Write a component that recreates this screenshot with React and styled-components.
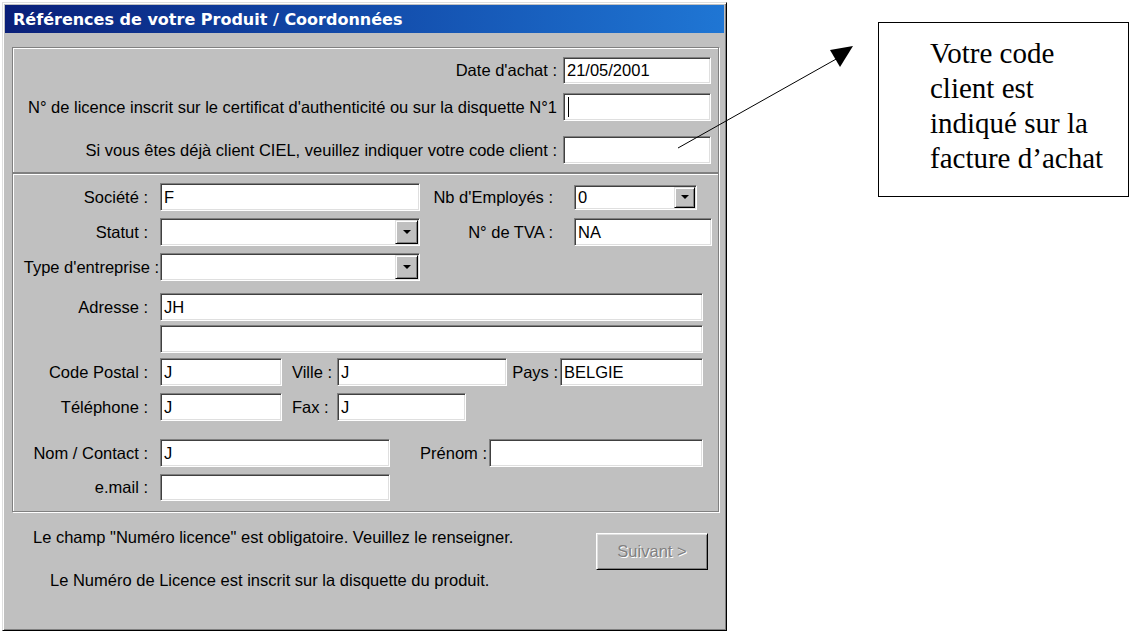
import React from 'react';
import styled, { createGlobalStyle } from 'styled-components';

const GlobalStyle = createGlobalStyle`
  html, body {
    margin: 0;
    background: #fff;
  }
  body {
    font-family: "Liberation Sans", Arial, sans-serif;
  }
`;

const Page = styled.div`
  position: relative;
  display: flex;
  align-items: flex-start;
  width: 1134px;
  height: 634px;
  padding: 2px;
  box-sizing: border-box;
  overflow: hidden;
`;

const Dialog = styled.div`
  width: 725px;
  height: 629px;
  box-sizing: border-box;
  padding: 2px;
  background: #c0c0c0;
  border: 1px solid;
  border-color: #dfdfdf #000 #000 #dfdfdf;
  box-shadow: inset 1px 1px 0 #fff, inset -1px -1px 0 #808080;
  display: flex;
  flex-direction: column;
  font-size: 16.5px;
  color: #000;
`;

const TitleBar = styled.div`
  height: 28px;
  flex-shrink: 0;
  display: flex;
  align-items: center;
  padding-left: 8px;
  background: linear-gradient(90deg, #0a1f78 0%, #0f3f9e 35%, #1f76d4 100%);
  color: #fff;
  font-family: "DejaVu Sans", Verdana, sans-serif;
  font-weight: bold;
  font-size: 16px;
  white-space: nowrap;
`;

const Body = styled.div`
  flex: 1;
  display: flex;
  flex-direction: column;
  padding: 14px 5px 0 7px;
`;

const Group = styled.div`
  box-sizing: border-box;
  height: ${p => p.$h}px;
  border: 1px solid #808080;
  box-shadow: inset 1px 1px 0 #fff, 1px 1px 0 #fff;
  padding: ${p => p.$pad};
`;

const RightRow = styled.div`
  display: flex;
  justify-content: flex-end;
  align-items: center;
  gap: 6px;
  height: ${p => p.$h || 28}px;
  margin-top: ${p => p.$mt || 0}px;
`;

const FormRow = styled.div`
  display: flex;
  align-items: center;
  height: ${p => p.$h || 28}px;
  margin-top: ${p => p.$mt || 0}px;
`;

const Label = styled.div`
  box-sizing: border-box;
  flex-shrink: 0;
  width: ${p => (p.$w ? `${p.$w}px` : 'auto')};
  text-align: ${p => p.$align || 'right'};
  padding-right: ${p => p.$pr || 0}px;
  padding-left: ${p => p.$pl || 0}px;
  white-space: nowrap;
`;

const Field = styled.div`
  box-sizing: border-box;
  flex-shrink: 0;
  width: ${p => p.$w}px;
  height: ${p => p.$h || 28}px;
  background: #fff;
  border: 1px solid;
  border-color: #808080 #fff #fff #808080;
  box-shadow: inset 1px 1px 0 #404040, inset -1px -1px 0 #dfdfdf;
  display: flex;
  align-items: center;
  padding: 0 1px 0 3px;
  white-space: nowrap;
  overflow: hidden;
`;

const Caret = styled.span`
  width: 1px;
  height: 20px;
  background: #000;
  margin-left: 1px;
`;

const DropBtn = styled.div`
  box-sizing: border-box;
  margin-left: auto;
  width: ${p => p.$w || 22}px;
  height: calc(100% - 2px);
  background: #c0c0c0;
  border: 1px solid;
  border-color: #dfdfdf #000 #000 #dfdfdf;
  box-shadow: inset 1px 1px 0 #fff, inset -1px -1px 0 #808080;
  display: flex;
  align-items: center;
  justify-content: center;

  &::after {
    content: '';
    border-left: 4px solid transparent;
    border-right: 4px solid transparent;
    border-top: 4px solid #000;
  }
`;

const Footer = styled.div`
  flex: 1;
  display: flex;
  align-items: flex-start;
  padding-right: 11px;
`;

const Messages = styled.div`
  display: flex;
  flex-direction: column;
`;

const Message = styled.div`
  margin-top: ${p => p.$mt}px;
  padding-left: ${p => p.$indent}px;
  line-height: 20px;
  white-space: nowrap;
`;

const Button = styled.button`
  margin-left: auto;
  margin-top: 21px;
  width: 112px;
  height: 37px;
  box-sizing: border-box;
  background: #c0c0c0;
  border: 1px solid;
  border-color: #fff #000 #000 #fff;
  box-shadow: inset 1px 1px 0 #dfdfdf, inset -1px -1px 0 #808080;
  font-family: inherit;
  font-size: 16.5px;
  color: #808080;
  text-shadow: 1px 1px 0 #fff;
  padding: 0;
`;

const Callout = styled.div`
  margin-left: 151px;
  margin-top: 20px;
  width: 251px;
  height: 175px;
  box-sizing: border-box;
  border: 1px solid #000;
  padding: 13px 0 0 51px;
  font-family: "Liberation Serif", "Times New Roman", serif;
  font-size: 29px;
  line-height: 35px;
  color: #000;
`;

const CalloutLine = styled.div`
  white-space: nowrap;
`;

const Overlay = styled.svg`
  position: absolute;
  left: 0;
  top: 0;
  pointer-events: none;
`;

const Select = ({ w, h, btn, children }) => (
  <Field $w={w} $h={h}>
    {children}
    <DropBtn $w={btn} />
  </Field>
);

export default function App() {
  return (
    <>
      <GlobalStyle />
      <Page>
        <Dialog>
          <TitleBar>Références de votre Produit / Coordonnées</TitleBar>
          <Body>
            <Group $h={126} $pad="9px 7px 0 0">
              <RightRow $h={27}>
                <Label>Date d'achat :</Label>
                <Field $w={148} $h={27}>21/05/2001</Field>
              </RightRow>
              <RightRow $mt={9}>
                <Label>N° de licence inscrit sur le certificat d'authenticité ou sur la disquette N°1</Label>
                <Field $w={148}><Caret /></Field>
              </RightRow>
              <RightRow $mt={15}>
                <Label>Si vous êtes déjà client CIEL, veuillez indiquer votre code client :</Label>
                <Field $w={148} />
              </RightRow>
            </Group>

            <Group $h={339} $pad="9px 0 0 0">
              <FormRow>
                <Label $w={147} $pr={12}>Société :</Label>
                <Field $w={260}>F</Field>
                <Label $w={154} $pr={21}>Nb d'Employés :</Label>
                <Select w={123} h={25} btn={21}>0</Select>
              </FormRow>
              <FormRow $mt={7}>
                <Label $w={147} $pr={12}>Statut :</Label>
                <Select w={260} btn={23} />
                <Label $w={154} $pr={21}>N° de TVA :</Label>
                <Field $w={138}>NA</Field>
              </FormRow>
              <FormRow $mt={7}>
                <Label $w={147} $pr={1}>Type d'entreprise :</Label>
                <Select w={260} btn={23} />
              </FormRow>
              <FormRow $mt={12}>
                <Label $w={147} $pr={12}>Adresse :</Label>
                <Field $w={543}>JH</Field>
              </FormRow>
              <FormRow $mt={4}>
                <Label $w={147} />
                <Field $w={543} />
              </FormRow>
              <FormRow $mt={5}>
                <Label $w={147} $pr={12}>Code Postal :</Label>
                <Field $w={122}>J</Field>
                <Label $w={55} $align="left" $pl={10}>Ville :</Label>
                <Field $w={170}>J</Field>
                <Label $w={53} $pr={2}>Pays :</Label>
                <Field $w={143}>BELGIE</Field>
              </FormRow>
              <FormRow $mt={7}>
                <Label $w={147} $pr={12}>Téléphone :</Label>
                <Field $w={122}>J</Field>
                <Label $w={55} $align="left" $pl={10}>Fax :</Label>
                <Field $w={129}>J</Field>
              </FormRow>
              <FormRow $mt={18}>
                <Label $w={147} $pr={12}>Nom / Contact :</Label>
                <Field $w={230}>J</Field>
                <Label $w={99} $pr={2}>Prénom :</Label>
                <Field $w={214} />
              </FormRow>
              <FormRow $mt={7} $h={27}>
                <Label $w={147} $pr={12}>e.mail :</Label>
                <Field $w={230} $h={27} />
              </FormRow>
            </Group>

            <Footer>
              <Messages>
                <Message $mt={15} $indent={21}>
                  Le champ "Numéro licence" est obligatoire. Veuillez le renseigner.
                </Message>
                <Message $mt={23} $indent={38}>
                  Le Numéro de Licence est inscrit sur la disquette du produit.
                </Message>
              </Messages>
              <Button disabled>Suivant &gt;</Button>
            </Footer>
          </Body>
        </Dialog>

        <Callout>
          <CalloutLine>Votre code</CalloutLine>
          <CalloutLine>client est</CalloutLine>
          <CalloutLine>indiqué sur la</CalloutLine>
          <CalloutLine>facture d’achat</CalloutLine>
        </Callout>

        <Overlay width="1134" height="634" viewBox="0 0 1134 634">
          <line x1="678" y1="148" x2="838" y2="58" stroke="#000" strokeWidth="1" />
          <polygon points="830,50 853,46 840,67" fill="#000" />
        </Overlay>
      </Page>
    </>
  );
}
